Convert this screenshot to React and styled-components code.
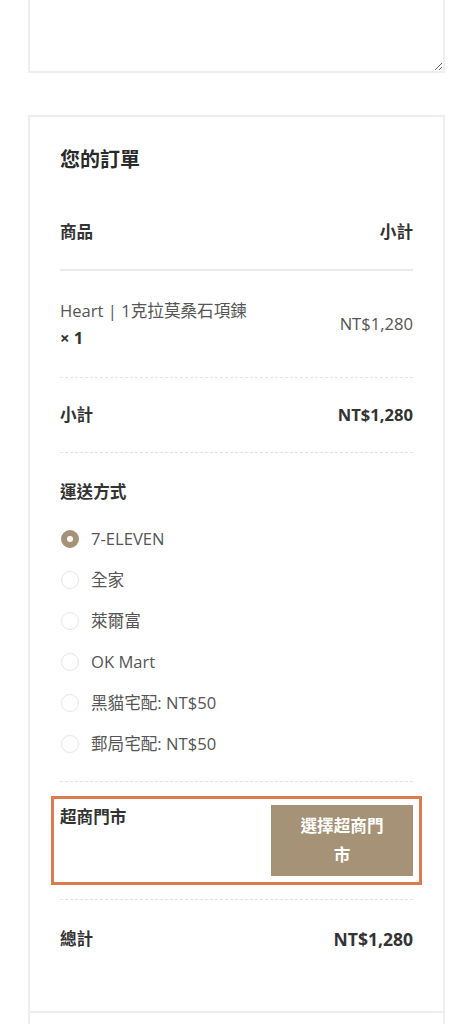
import React from "react";
import styled, { createGlobalStyle } from "styled-components";

const Global = createGlobalStyle`
  html, body { margin: 0; padding: 0; background: #fff; }
  body {
    font-family: "Open Sans", "Noto Sans CJK TC", sans-serif;
    color: #333;
    -webkit-font-smoothing: antialiased;
  }
`;

const Page = styled.div`
  padding: 0 28px;
  display: flex;
  flex-direction: column;
  gap: 42px;
`;

const Notes = styled.textarea`
  display: block;
  box-sizing: border-box;
  width: 100%;
  height: 73px;
  border: 2px solid #eceef1;
  border-top: none;
  background: #fff;
  resize: vertical;
  outline: none;
  font: inherit;
`;

const Card = styled.section`
  border: 2px solid #eceef1;
  border-bottom: none;
`;

const Review = styled.div`
  padding: 29px 30px 33px;
`;

const Title = styled.h3`
  margin: 0 0 21px;
  font-size: 20px;
  line-height: 28px;
  font-weight: 700;
  color: #2a2a2a;
`;

const Row = styled.div`
  display: flex;
  justify-content: space-between;
  align-items: ${(p) => (p.$top ? "flex-start" : "center")};
  padding: ${(p) => p.$pad || "25px 0"};
  border-bottom: ${(p) =>
    p.$solid ? "2px solid #e9eaec" : p.$last ? "none" : "1px dashed #e3e3e3"};
  font-size: 16.6px;
  line-height: 24px;
`;

const Label = styled.span`
  font-weight: 700;
  color: #333;
`;

const Amount = styled.span`
  font-weight: ${(p) => (p.$bold ? 700 : 400)};
  font-size: ${(p) => (p.$big ? "17.5px" : "16.6px")};
  color: ${(p) => (p.$bold ? "#333" : "#555")};
`;

const Product = styled.div`
  display: flex;
  flex-direction: column;
  line-height: 27px;
  color: #555;
`;

const Qty = styled.strong`
  color: #333;
  font-weight: 700;
`;

const Shipping = styled.div`
  padding: 27px 0 17px;
  border-bottom: 1px dashed #e3e3e3;
  font-size: 16.6px;
  line-height: 24px;
`;

const ShipTitle = styled.div`
  font-weight: 700;
  margin-bottom: 14px;
`;

const Options = styled.ul`
  list-style: none;
  margin: 0;
  padding: 0;
`;

const Option = styled.li`
  height: 41px;
  display: flex;
  align-items: center;
  gap: 12px;
  color: #555;
`;

const Radio = styled.span`
  box-sizing: border-box;
  width: 18px;
  height: 18px;
  margin-left: 1px;
  border-radius: 50%;
  border: ${(p) => (p.$on ? "6px solid #a69276" : "1px solid #e6e6e6")};
  background: #fff;
`;

const StoreWrap = styled.div`
  padding: 23px 0;
  border-bottom: 1px dashed #e3e3e3;
  font-size: 16.6px;
  line-height: 24px;
`;

const StoreRow = styled.div`
  display: flex;
  justify-content: space-between;
  align-items: flex-start;
  outline: 3px solid #dc7b4e;
  outline-offset: 6px;
`;

const StoreButton = styled.button`
  box-sizing: border-box;
  width: 142px;
  padding: 7px 22px;
  border: none;
  background: #a69276;
  color: #fff;
  font: inherit;
  font-size: 16.6px;
  font-weight: 700;
  line-height: 28.5px;
  text-align: center;
  cursor: pointer;
`;

const Payment = styled.div`
  border-top: 2px solid #eceef1;
  height: 120px;
`;

const options = ["7-ELEVEN", "全家", "萊爾富", "OK Mart", "黑貓宅配: NT$50", "郵局宅配: NT$50"];

export default function App() {
  return (
    <>
      <Global />
      <Page>
        <Notes aria-label="訂單備註" />
        <Card>
          <Review>
            <Title>您的訂單</Title>
            <Row $solid>
              <Label>商品</Label>
              <Label>小計</Label>
            </Row>
            <Row $pad="26px 0">
              <Product>
                <span>Heart | 1克拉莫桑石項鍊</span>
                <Qty>× 1</Qty>
              </Product>
              <Amount>NT$1,280</Amount>
            </Row>
            <Row>
              <Label>小計</Label>
              <Amount $bold>NT$1,280</Amount>
            </Row>
            <Shipping>
              <ShipTitle>運送方式</ShipTitle>
              <Options>
                {options.map((o, i) => (
                  <Option key={o}>
                    <Radio $on={i === 0} />
                    {o}
                  </Option>
                ))}
              </Options>
            </Shipping>
            <StoreWrap>
              <StoreRow>
                <Label>超商門市</Label>
                <StoreButton>選擇超商門市</StoreButton>
              </StoreRow>
            </StoreWrap>
            <Row $pad="27px 0" $last>
              <Label>總計</Label>
              <Amount $bold $big>NT$1,280</Amount>
            </Row>
          </Review>
          <Payment />
        </Card>
      </Page>
    </>
  );
}
